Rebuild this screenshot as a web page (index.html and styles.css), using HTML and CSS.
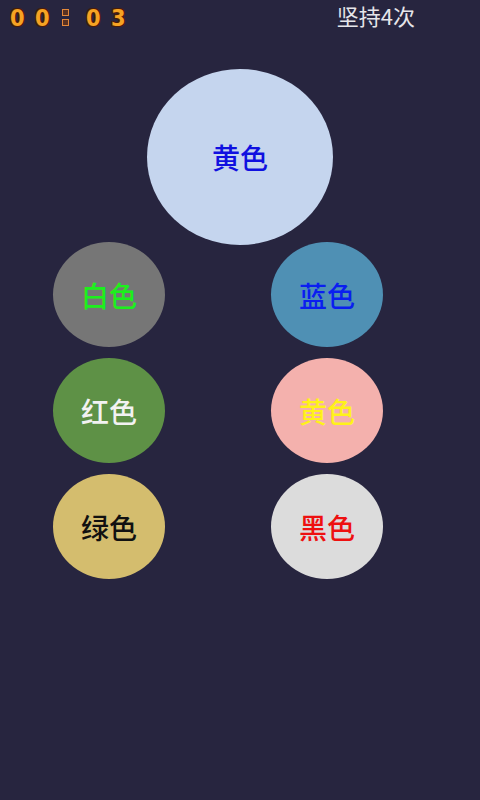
FILE: index.html
```html
<!DOCTYPE html>
<html lang="zh">
<head>
    <meta charset="UTF-8">
    <meta name="viewport" content="width=device-width, initial-scale=1.0">
    <title>颜色游戏</title>
    <link rel="stylesheet" href="styles.css">
</head>
<body>
    <header class="top_bar">
        <div class="timer">
            <span class="digit">0</span>
            <span class="digit">0</span>
            <span class="colon"><i></i><i></i></span>
            <span class="digit">0</span>
            <span class="digit">3</span>
        </div>
        <div class="count">坚持4次</div>
    </header>

    <!-- Target colour -->
    <div class="big_ball">黄色</div>

    <!-- Choices -->
    <div class="ball_grid">
        <div class="ball ball_grey">白色</div>
        <div class="ball ball_blue">蓝色</div>
        <div class="ball ball_green">红色</div>
        <div class="ball ball_pink">黄色</div>
        <div class="ball ball_tan">绿色</div>
        <div class="ball ball_light">黑色</div>
    </div>
</body>
</html>
```

FILE: styles.css
```css
body {
    font-family: "Noto Sans CJK SC", "Liberation Sans", sans-serif;
    background-color: #27253f;
    margin: 0;
    padding: 0;
    width: 480px;
    height: 800px;
    overflow: hidden;
}

.top_bar {
    display: flex;
    justify-content: space-between;
    align-items: center;
    height: 35px;
    padding: 0 65px 0 10px;
}

.timer {
    display: flex;
    align-items: center;
    height: 35px;
}

.digit {
    font-family: "DejaVu Sans", sans-serif;
    font-weight: bold;
    font-size: 21px;
    line-height: 22px;
    color: #f6a323;
    width: 12px;
    margin-right: 13px;
    text-align: center;
    transform: scaleY(1.1);
    text-shadow: 1px 1px 0 #4a1c08, -1px -1px 0 #4a1c08, 1px -1px 0 #4a1c08, -1px 1px 0 #4a1c08;
}

.colon {
    display: flex;
    flex-direction: column;
    gap: 3px;
    margin: 0 17px 0 2px;
}

.colon i {
    display: block;
    width: 5px;
    height: 5px;
    border: 1px solid #e3883a;
    background-color: #5a3222;
}

.count {
    color: #e6e6ea;
    font-size: 22px;
    line-height: 26px;
    margin-bottom: 5px;
}

.big_ball {
    width: 186px;
    height: 176px;
    margin: 34px auto 0;
    border-radius: 50%;
    background-color: #c5d5ee;
    color: #1010e0;
    font-size: 28px;
    font-weight: 500;
    display: flex;
    align-items: center;
    justify-content: center;
}

.ball_grid {
    display: grid;
    grid-template-columns: 112px 112px;
    column-gap: 106px;
    row-gap: 11px;
    padding-left: 53px;
    margin-top: -3px;
}

.ball {
    width: 112px;
    height: 105px;
    border-radius: 50%;
    font-size: 28px;
    font-weight: 500;
    display: flex;
    align-items: center;
    justify-content: center;
}

.ball_grey {
    background-color: #767676;
    color: #1cf01c;
}

.ball_blue {
    background-color: #4f90b4;
    color: #0a1ef0;
}

.ball_green {
    background-color: #5e9146;
    color: #f2f2f2;
}

.ball_pink {
    background-color: #f4b1ad;
    color: #fff21a;
}

.ball_tan {
    background-color: #d4bd6e;
    color: #111111;
}

.ball_light {
    background-color: #dcdcdc;
    color: #ee1010;
}
```
